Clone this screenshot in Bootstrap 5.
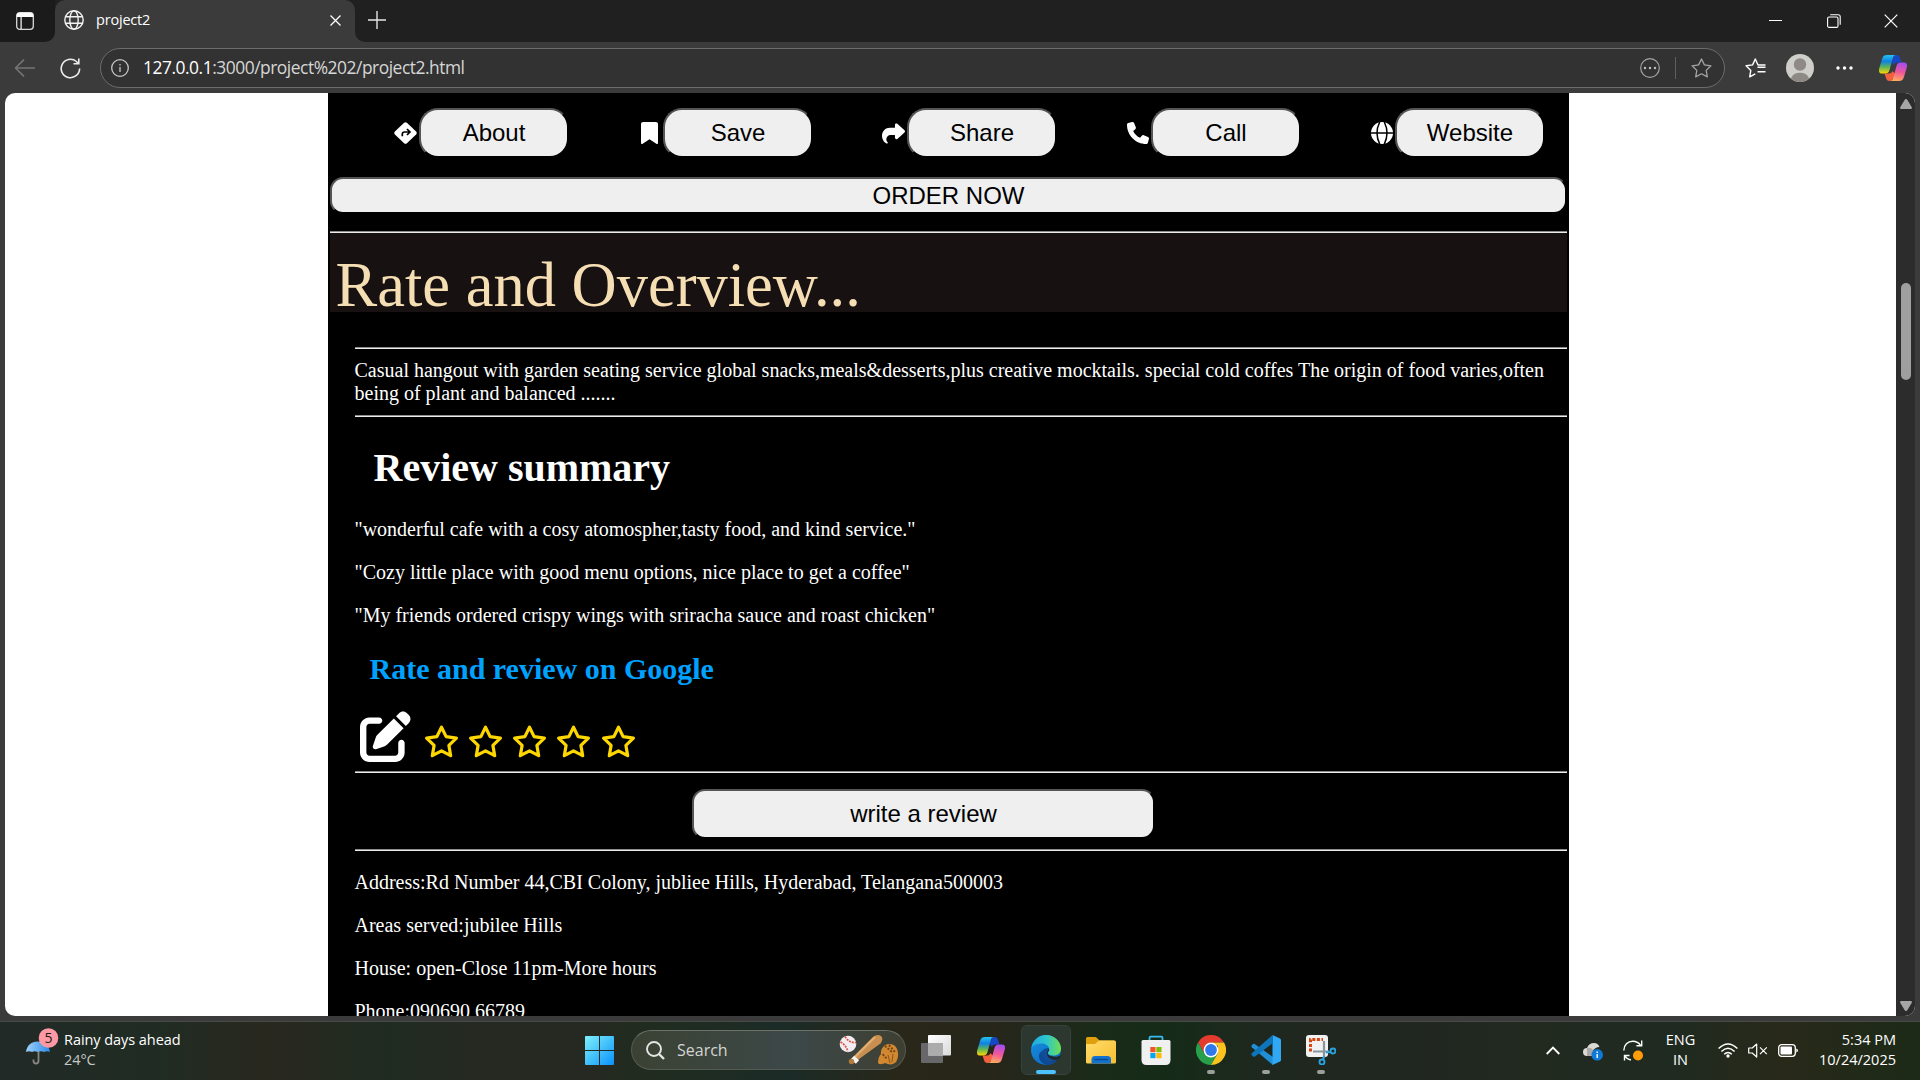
<!DOCTYPE html>
<html lang="en">
<head>
<meta charset="utf-8">
<title>project2</title>
<meta name="viewport" content="width=device-width, initial-scale=1">
<link href="https://cdn.jsdelivr.net/npm/bootstrap@5.3.0/dist/css/bootstrap.min.css" rel="stylesheet">
<style>
body{font-family:"Open Sans","Noto Sans",sans-serif;background:#3b3b3b;color:#fff}
svg{display:block;flex:none}
.tabstrip{height:42px;background:#202020}
.tabmenu{width:55px;background:#1b1b1b;border-bottom-right-radius:10px;padding-left:16px}
.tabmenu-wrap{background:#3b3b3b}
.tab-slot{background:#202020}
.tab-active{width:300px;background:#3b3b3b;border-radius:10px 10px 0 0;padding:0 14px 2px 9px;font-size:14.5px}
.tab-rest{background:#202020;border-bottom-left-radius:10px;padding-left:13px}
.tab-rest-wrap{background:#3b3b3b}
.tab-title{letter-spacing:-.2px;margin-left:12px}
.newtab{margin-bottom:3px}
.win-controls{padding-right:22px}
.toolbar{height:51px;padding:6px 13px 5px 14px}
.omnibox{height:40px;width:1625px;margin-left:20px;border:1px solid #6c6c6c;border-radius:20px;background:#323232;padding:0 12px 0 10px}
.url{font-size:17.4px;letter-spacing:-.47px;margin-left:14px;padding-bottom:1px;color:#d6d6d6;white-space:nowrap}
.url b{font-weight:400;color:#fff}
.vsep{width:1px;height:22px;background:#5e5e5e;margin:0 15px}
.surface{height:923px;width:1910px;margin-left:5px;border-radius:10px;background:#fff}
.scroller{width:19px;background:#2c2c2c;padding:6px 3px 5px}
.thumb{width:10px;height:97px;border-radius:5px;background:#9f9f9f;margin-top:174px}
.cafe{width:1241px;margin-left:323px;background:#000;font-family:"Liberation Serif",serif;font-size:20px;line-height:23px;padding:15px 2px 0}
.cafe p{margin:0 0 20px -.5px}
.cafe .blurb{margin:10px 0 10px -.5px}
.cafe button{font:24px/1 "Liberation Sans",sans-serif;background:#efefef;color:#000;border:2px solid;border-color:#555 #000 #000 #555;padding:0}
.actions{gap:69px;padding-right:22px}
.action-icon{width:23px;height:50px;margin-right:2px}
.actions button{width:150px;height:50px;border-radius:19px}
.cafe .order{height:37px;border-radius:13px;margin:19px 0 17px;width:100%}
.rule{height:2px;background:linear-gradient(#8c8c8c 50%,#ececec 50%)}
.overview{height:79px;background:#171211;color:#f5deb3;font-size:62.5px;line-height:104px;padding-left:5.5px;margin-bottom:35px;white-space:nowrap}
.details{padding-left:25px}
.cafe h1{font-size:40px;line-height:46px;font-weight:700;margin:28px 0 27px;padding-left:18.5px}
.cafe h3{font-size:30px;line-height:34px;font-weight:700;margin:25px 0;padding-left:14.5px;color:#00a2ff}
.rating{height:50px;padding-left:5px;margin-bottom:10px}
.cafe .write{width:463px;height:50px;border-radius:13px;margin:16px 0 10px 337px}
.taskbar{height:59px;margin-top:5px;padding-bottom:2px;border-top:1px solid #484a48;background:linear-gradient(90deg,#222a27 0,#202c23 8%,#29281f 14%,#1f2b21 20%,#262922 25%,#252921 31%,#202c1f 34%,#1b2b27 41%,#292719 47%,#26261b 52%,#182b19 58%,#152b18 61%,#1f281f 66%,#202620 73%,#222a20 80%,#1f2a20 87%,#282919 93%,#1c2a17 100%)}
.weather{width:585px;padding:0 0 1px 24px;font-size:14.5px;line-height:20px;letter-spacing:-.06px}
.weather-pic{width:40px;height:38px;margin-top:-7px}
.search{width:275px;height:40px;margin-left:17px;border-radius:20px;border:1px solid #545a50;border-top-color:#6c7267;background:linear-gradient(90deg,#3b4234,#3c4641 40%,#3c4849 60%,#3e3f31);padding:0 6px 0 14px;font-size:16px;color:#d3d5d2}
.apps{margin-left:2.5px}
.slot{width:55px;height:50px;padding-top:10px}
.slot i{display:block;height:4px;width:8px;border-radius:2px;background:#9a9f99;margin-top:5px}
.slot .tile{width:50px;height:50px;border-radius:6px;background:#2b372f;border:1px solid #37423a;margin-top:-10px;padding-top:9px}
.slot .tile i{width:20px;background:#4cc2ff}
.tray{padding-right:24px;font-size:14.5px;line-height:20px}
</style>
<script src="https://cdn.jsdelivr.net/npm/bootstrap@5.3.0/dist/js/bootstrap.bundle.min.js"></script>
</head>
<body class="vh-100 overflow-hidden">
<svg width="0" height="0" class="position-absolute">
<defs>
<linearGradient id="cpA" x1="0" y1="0" x2="0" y2="1"><stop offset="0" stop-color="#22c3f3"/><stop offset=".35" stop-color="#1181e0"/><stop offset=".65" stop-color="#5ab55a"/><stop offset="1" stop-color="#ffd600"/></linearGradient>
<linearGradient id="cpB" x1=".6" y1="0" x2=".4" y2="1"><stop offset="0" stop-color="#a34df0"/><stop offset=".5" stop-color="#f0569a"/><stop offset="1" stop-color="#ffac5e"/></linearGradient>
<symbol id="copilot" viewBox="0 0 28 26">
<path d="M16 0h1.500c2 0 3 1 3.600 3l1.400 4.500h-4c-2 0-3 1-3.500 2.500L12 6z" fill="#1747c4"/>
<path d="M12 26h-1.500c-2 0-3-1-3.500-3l-1.500-4.500h4.500c2 0 3-1 3.500-2.500L17 20z" fill="#f2603e"/>
<path d="M8 0h9c-2 0-2.700 1.500-3.300 3.500L10.500 15c-.8 2.600-2 3.500-4.500 3.500H3c-2.600 0-3.600-2-2.800-5L3.200 3.500C4 1 5.500 0 8 0z" fill="url(#cpA)"/>
<path d="M20 26h-9c2 0 2.700-1.500 3.300-3.500L17.500 11c.8-2.600 2-3.500 4.500-3.500h3c2.600 0 3.600 2 2.800 5l-3 10c-.8 2.500-2.300 3.500-4.800 3.500z" fill="url(#cpB)"/>
</symbol>
<symbol id="star" viewBox="0 0 35 33"><path d="M17.500 2.200l4.600 9.400 10.300 1.500-7.500 7.300 1.800 10.300-9.200-4.900-9.200 4.900 1.800-10.300-7.500-7.300 10.300-1.500z" fill="none" stroke="#ffd700" stroke-width="3.200" stroke-linejoin="round"/></symbol>
</defs>
</svg>

<!-- Tab strip -->
<div class="tabstrip d-flex">
  <div class="tabmenu-wrap"><div class="tabmenu h-100 d-flex align-items-center"><svg width="18" height="18" viewBox="0 0 18 18"><rect x=".7" y=".7" width="16.600" height="16.600" rx="3" fill="none" stroke="#d8d8d8" stroke-width="1.300"/><path d="M.7 5V3.500Q.7.700 3.500.700h11q2.800 0 2.800 2.800V5zM4.500 5h1.200v12H4.500z" fill="#fff"/></svg></div></div>
  <div class="tab-rest-wrap d-flex flex-grow-1">
    <div class="tab-slot"><div class="tab-active h-100 d-flex align-items-center">
      <svg width="20" height="20" viewBox="0 0 20 20" fill="none" stroke="#f2f2f2" stroke-width="1.400"><circle cx="10" cy="10" r="9.200"/><ellipse cx="10" cy="10" rx="4.200" ry="9.200"/><path d="M1.600 6.800h16.800M1.600 13.200h16.800"/></svg>
      <span class="tab-title">project2</span>
      <svg class="ms-auto" width="11" height="11" viewBox="0 0 11 11" stroke="#fff" stroke-width="1.300"><path d="M.5.500l10 10M10.500.500l-10 10"/></svg>
    </div></div>
    <div class="tab-rest flex-grow-1 d-flex align-items-center">
      <svg class="newtab" width="18" height="18" viewBox="0 0 18 18" stroke="#e6e6e6" stroke-width="1.400"><path d="M9 0v18M0 9h18"/></svg>
      <div class="win-controls ms-auto d-flex align-items-center">
        <svg width="13" height="13" stroke="#fff"><path d="M0 5.500h13"/></svg>
        <svg class="mx-0" width="102" height="14" viewBox="-45 0 102 14" fill="none" stroke="#fff" stroke-width="1.100"><rect x=".6" y="3" width="10.400" height="10.400" rx="1.500"/><path d="M3.200.7h8q2 0 2 2v8"/></svg>
        <svg width="14" height="14" viewBox="0 0 14 14" stroke="#fff" stroke-width="1.200"><path d="M.7.700l12.600 12.600M13.300.700L.7 13.300"/></svg>
      </div>
    </div>
  </div>
</div>

<!-- Toolbar -->
<div class="toolbar d-flex align-items-center">
  <svg width="21" height="18" viewBox="0 0 21 18" fill="none" stroke="#767676" stroke-width="1.500"><path d="M21 9H1.500M10 .6L1.500 9l8.500 8.400"/></svg>
  <svg width="21" height="21" viewBox="0 0 21 21" fill="none" stroke="#ededed" stroke-width="1.600" style="margin-left:25px;margin-right:-1px"><path d="M19.600 10.500a9.200 9.200 0 1 1-3.200-7l2.200 2.200M18.800.500v5.300h-5.300"/></svg>
  <div class="omnibox d-flex align-items-center">
    <svg width="18" height="18" viewBox="0 0 18 18" fill="none" stroke="#c8c8c8" stroke-width="1.300"><circle cx="9" cy="9" r="8.300"/><path d="M9 8v5M9 5v1.500"/></svg>
    <span class="url"><b>127.0.0.1</b>:3000/project%202/project2.html</span>
    <svg class="ms-auto" width="20" height="20" viewBox="0 0 20 20"><circle cx="10" cy="10" r="9.300" fill="none" stroke="#a4a4a4" stroke-width="1.200"/><g fill="#c0c0c0"><circle cx="5" cy="10" r="1.200"/><circle cx="10" cy="10" r="1.200"/><circle cx="15" cy="10" r="1.200"/></g></svg>
    <div class="vsep"></div>
    <svg width="21" height="20" viewBox="0 0 21 20" fill="none" stroke="#a4a4a4" stroke-width="1.300" stroke-linejoin="round"><path d="M10.500 1l2.900 5.900 6.500.9-4.700 4.600 1.100 6.500-5.800-3.100-5.800 3.100 1.100-6.500L1.100 7.800l6.500-.9z"/></svg>
  </div>
  <svg width="21" height="20" viewBox="0 0 21 20" fill="none" stroke="#fff" stroke-width="1.400" stroke-linejoin="round" style="margin-left:20px"><path d="M20.500 9.300h-8M20.500 13.800h-8M20.500 7H13L10.300 1 7.600 6.900l-6.500.9 4.700 4.600-1.100 6.500 5.600-3"/></svg>
  <svg width="28" height="28" viewBox="0 0 28 28" style="margin-left:20px"><circle cx="14" cy="14" r="14" fill="#d0cecb"/><circle cx="14" cy="10.500" r="6.200" fill="#8e8985"/><path d="M5 24.700c1-4 4.500-6 9-6s8 2 9 6a14 14 0 0 1-18 0z" fill="#8e8985"/></svg>
  <svg width="17" height="4" viewBox="0 0 17 4" fill="#fff" style="margin-left:22px"><circle cx="2" cy="2" r="1.700"/><circle cx="8.500" cy="2" r="1.700"/><circle cx="15" cy="2" r="1.700"/></svg>
  <svg class="ms-auto" width="28" height="26"><use href="#copilot"/></svg>
</div>

<!-- Page -->
<div class="surface d-flex overflow-hidden">
  <main class="cafe flex-shrink-0">
    <div class="actions d-flex justify-content-end">
      <div class="d-flex"><span class="action-icon d-flex align-items-center justify-content-center"><svg width="23" height="22" viewBox="0 0 23 22"><path d="M10.100.800q1.400-1.300 2.800 0l9.200 8.800q1.300 1.400 0 2.800l-9.200 8.800q-1.400 1.300-2.800 0L.9 12.400q-1.300-1.400 0-2.800z" fill="#fff"/><path d="M8.300 14.300v-2q0-2.300 2.300-2.300h4.600M13 7l3 3-3 3" fill="none" stroke="#000" stroke-width="1.700"/></svg></span><button>About</button></div>
      <div class="d-flex"><span class="action-icon d-flex align-items-center justify-content-center"><svg width="17" height="22" viewBox="0 0 384 512" preserveAspectRatio="none" fill="#fff"><path d="M0 48V488C0 501 11 512 24 512c5 0 10-1.500 14-4.400L192 400l154 107.600c4 2.900 9 4.400 14 4.400 13 0 24-11 24-24V48c0-26-22-48-48-48H48C22 0 0 22 0 48z"/></svg></span><button>Save</button></div>
      <div class="d-flex"><span class="action-icon d-flex align-items-center justify-content-center"><svg width="23" height="23" viewBox="0 0 512 512" fill="#fff"><path d="M307 34.800c-11.500 5.100-19 16.600-19 29.200v64H176C78.800 128 0 206.800 0 304c0 113.300 81.500 163.900 100.200 174.100 2.500 1.400 5.300 1.900 8.100 1.900 10.900 0 19.700-8.900 19.700-19.700 0-7.500-4.300-14.400-9.800-19.500C108.800 431.900 96 414.400 96 384c0-53 43-96 96-96h96v64c0 12.600 7.400 24.100 19 29.200s25 3 34.400-5.400l160-144c6.700-6.100 10.600-14.700 10.600-23.800s-3.800-17.700-10.600-23.800l-160-144c-9.400-8.500-22.900-10.600-34.400-5.400z"/></svg></span><button>Share</button></div>
      <div class="d-flex"><span class="action-icon d-flex align-items-center justify-content-center"><svg width="22" height="22" viewBox="0 0 512 512" fill="#fff"><path d="M164.900 24.600c-7.700-18.600-28-28.500-47.400-23.200l-88 24C12.100 30.200 0 46 0 64c0 247.400 200.600 448 448 448 18 0 33.800-12.100 38.600-29.500l24-88c5.300-19.400-4.600-39.700-23.200-47.400l-96-40c-16.300-6.800-35.200-2.100-46.300 11.600L304.700 368C234.300 334.700 177.300 277.700 144 207.300L193.300 167c13.700-11.200 18.400-30 11.600-46.300l-40-96z"/></svg></span><button>Call</button></div>
      <div class="d-flex"><span class="action-icon d-flex align-items-center justify-content-center"><svg width="22" height="22" viewBox="0 0 22 22"><circle cx="11" cy="11" r="11" fill="#fff"/><path d="M0 11h22M8.700 0q-5.400 11 0 22M13.300 0q5.400 11 0 22" fill="none" stroke="#000" stroke-width="1.500"/></svg></span><button>Website</button></div>
    </div>
    <button class="order d-block">ORDER NOW</button>
    <div class="rule"></div>
    <div class="overview">Rate and Overview...</div>
    <div class="details">
      <div class="rule"></div>
      <p class="blurb">Casual hangout with garden seating service global snacks,meals&amp;desserts,plus creative mocktails. special cold coffes The origin of food varies,often being of plant and balanced .......</p>
      <div class="rule"></div>
      <h1>Review summary</h1>
      <p>"wonderful cafe with a cosy atomospher,tasty food, and kind service."</p>
      <p>"Cozy little place with good menu options, nice place to get a coffee"</p>
      <p>"My friends ordered crispy wings with sriracha sauce and roast chicken"</p>
      <h3>Rate and review on Google</h3>
      <div class="rating d-flex align-items-end">
        <svg width="51" height="51" viewBox="0 0 512 512" fill="#fff" style="margin-right:13px;margin-bottom:-1px"><path d="M471.600 21.700c-21.900-21.900-57.300-21.900-79.200 0L362.300 51.700l97.900 97.900 30.100-30.100c21.900-21.900 21.900-57.300 0-79.200L471.600 21.700zm-299.200 220c-6.100 6.100-10.800 13.600-13.500 21.900l-29.600 88.800c-2.900 8.600-.6 18.100 5.800 24.600s15.900 8.700 24.600 5.800l88.800-29.600c8.200-2.700 15.700-7.400 21.900-13.500L437.700 172.300 339.700 74.300 172.400 241.700zM96 64C43 64 0 107 0 160v256c0 53 43 96 96 96h256c53 0 96-43 96-96v-96c0-17.700-14.300-32-32-32s-32 14.300-32 32v96c0 17.700-14.300 32-32 32H96c-17.700 0-32-14.300-32-32V160c0-17.700 14.300-32 32-32h96c17.700 0 32-14.300 32-32s-14.300-32-32-32H96z"/></svg>
        <div class="d-flex" style="gap:9.150px;padding-bottom:3px">
          <svg width="35" height="33"><use href="#star"/></svg><svg width="35" height="33"><use href="#star"/></svg><svg width="35" height="33"><use href="#star"/></svg><svg width="35" height="33"><use href="#star"/></svg><svg width="35" height="33"><use href="#star"/></svg>
        </div>
      </div>
      <div class="rule"></div>
      <button class="write d-block">write a review</button>
      <div class="rule" style="margin-bottom:20px"></div>
      <p>Address:Rd Number 44,CBI Colony, jubliee Hills, Hyderabad, Telangana500003</p>
      <p>Areas served:jubilee Hills</p>
      <p>House: open-Close 11pm-More hours</p>
      <p>Phone:090690 66789</p>
    </div>
  </main>
  <div class="scroller ms-auto d-flex flex-column align-items-center">
    <svg width="12" height="10" fill="#a6a6a6"><path d="M6 0q.8 0 1.300.8l4.500 7.400q.5 1.800-1 1.800H1.200Q-.3 10 .2 8.200L4.700.800Q5.200 0 6 0z"/></svg>
    <div class="thumb"></div>
    <svg class="mt-auto" width="12" height="10" fill="#a6a6a6"><path d="M6 10q.8 0 1.300-.8l4.500-7.400Q12.300 0 10.800 0H1.200Q-.3 0 .2 1.800l4.500 7.400Q5.200 10 6 10z"/></svg>
  </div>
</div>

<!-- Taskbar -->
<div class="taskbar d-flex align-items-center">
  <div class="weather d-flex align-items-center">
    <svg class="weather-pic" viewBox="0 0 40 38"><defs><linearGradient id="um"><stop offset="0" stop-color="#9fd2fb"/><stop offset="1" stop-color="#2a8be8"/></linearGradient></defs><path d="M14.500 23v11a2.500 2.500 0 0 1-5 0v-1.500" fill="none" stroke="#8b8583" stroke-width="1.800"/><path d="M2 25C3 18 7.500 14.500 13.500 14.500S25 18 26 25q-3-1.500-6 0-3-1.500-6.500 0-3-1.500-5.500 0-3-1.500-6 0z" fill="url(#um)"/><circle cx="24.500" cy="11" r="9.800" fill="#fe99a4"/><text x="24.500" y="16" text-anchor="middle" font-size="14" fill="#1a1a1a">5</text></svg>
    <div><div>Rainy days ahead</div><div style="color:#c6c9c6">24°C</div></div>
  </div>
  <svg width="29" height="29" viewBox="0 0 29 29"><defs><linearGradient id="wn" x1="0" y1="0" x2="1" y2="1"><stop offset="0" stop-color="#7ef0fc"/><stop offset="1" stop-color="#0a92fa"/></linearGradient></defs><path d="M1 0h13v14H0V1q0-1 1-1zM15 0h13q1 0 1 1v13H15zM0 15h14v14H1q-1 0-1-1zM15 15h14v13q0 1-1 1H15z" fill="url(#wn)"/></svg>
  <div class="search d-flex align-items-center">
    <svg width="19" height="19" viewBox="0 0 19 19" fill="none" stroke="#e4e6e4" stroke-width="1.900"><circle cx="8" cy="8" r="7"/><path d="M13 13l5 5" stroke-width="2.400"/></svg>
    <span style="margin-left:12px">Search</span>
    <svg class="ms-auto" width="60" height="32" viewBox="0 0 60 32"><circle cx="9" cy="10" r="8.300" fill="#f1edf2"/><path d="M1.500 8Q7 11 9 17.500M6 2.500q4 6.500 11 6" fill="none" stroke="#e0503f" stroke-width="1.700" stroke-dasharray="2 1"/><path d="M11 26L34 3q4-3.500 8-1 3 3-.5 7.500L14.500 29z" fill="#c98f50"/><path d="M14 25L36 3" stroke="#e3b073" stroke-width="2"/><path d="M13.500 23.500l5 4.500" stroke="#f4f2ef" stroke-width="5"/><circle cx="12.500" cy="27.500" r="2.700" fill="#b27a3c"/><path d="M39 29c0-4 1-7 3-9-1-4 3-10 8-10q6 0 8 5c2 5 1 10-1 13-3 3-7 3-11 1-2 1-5 2-7 0z" fill="#d18830"/><path d="M44 20c1 3 3 4 5 4M46 12l8 7M50 11l6 7" stroke="#754516" stroke-width="2" stroke-dasharray="2 1.500" fill="none"/><path d="M49 21l2 8M54 20l-1 8" stroke="#8c5518" fill="none"/></svg>
  </div>
  <div class="apps d-flex">
    <div class="slot d-flex flex-column align-items-center"><svg width="30" height="28" viewBox="0 0 30 28"><defs><linearGradient id="tv" x1="0" x2="1" y1="0" y2="1"><stop offset="0" stop-color="#fff"/><stop offset="1" stop-color="#d9d9d9"/></linearGradient></defs><rect y="8" width="22" height="20" rx="1" fill="#68686a"/><rect x="7" y="0" width="23" height="20.500" rx="1" fill="url(#tv)"/><path d="M7 8h15v12.500H7z" fill="#acacad"/></svg></div>
    <div class="slot d-flex flex-column align-items-center"><svg width="28" height="26" style="margin-top:2px"><use href="#copilot"/></svg></div>
    <div class="slot d-flex flex-column align-items-center"><div class="tile d-flex flex-column align-items-center">
      <svg width="30" height="30" viewBox="0 0 30 30"><defs><linearGradient id="ea" x1="0" x2="1"><stop offset="0" stop-color="#1fa9dd"/><stop offset=".5" stop-color="#2cc5cf"/><stop offset="1" stop-color="#6fe04e"/></linearGradient><linearGradient id="eb" x1="0" x2=".7" y2="1"><stop offset="0" stop-color="#1794df"/><stop offset="1" stop-color="#0d69c4"/></linearGradient></defs><circle cx="15" cy="15" r="15" fill="url(#eb)"/><path d="M.5 12.500C2 5 7.800 0 15 0c8.500 0 15 6.500 15 13.500 0 4.500-3.300 7-7.500 7-3.600 0-5.700-1.200-5.700-2.500 0-1 1.400-1.500 1.400-3.800 0-3.200-3.200-5.700-7.400-5.700C6.500 8.500 2.500 10 .5 12.500z" fill="url(#ea)"/><path d="M10.700 16.500c-.7 6.500 4 10.300 9 10.300 3.200 0 5.800-1.300 7.500-2.800C24.500 28 20 30 15.500 30c-4-1-8-5-7.500-9.500.2-2 1.200-3.500 2.700-4z" fill="#0c4a97"/><path d="M30 20.700q-.2-1-1-.3c-1.500 1-4 1.500-6.500 1.200-3.700-.3-6.200-2-5.700-4 .3-1.200 1.500-1.600 1.400-3.600-3.500-1-7 1-7.500 4-.6 4.600 3.500 8.800 9 8.800 5 0 9-2.500 10.300-6.100z" fill="#20272a"/><path d="M18 13.500c-3.800-.7-7.300 1.600-7.500 5-.1 4.500 4 8.500 9.500 8.300 3 0 5.500-1.200 7-2.300-5 1.500-11-1.500-11-6 0-2 1-4 2-5z" fill="#114d9b"/></svg>
      <i></i></div></div>
    <div class="slot d-flex flex-column align-items-center"><svg width="30" height="28" viewBox="0 0 30 28" style="margin-top:1px"><defs><linearGradient id="fo" x1="0" x2="1" y1="0" y2="1"><stop offset="0" stop-color="#ffdc6b"/><stop offset="1" stop-color="#f8bf30"/></linearGradient></defs><path d="M0 2.500Q0 1 1.500 1H9q1 0 2 1l2.500 2.500H28V12H0z" fill="#e0a00e"/><path d="M0 8h9l4-3.500h15.500Q30 4.500 30 6v20q0 1.500-1.500 1.500h-27Q0 27.500 0 26z" fill="url(#fo)"/><path d="M5.500 27.500v-4q0-3.500 3.500-3.500h12.500q3.500 0 3.500 3.500v4z" fill="#1372cb"/><path d="M9 23.500h12.500" stroke="#084b90" stroke-width="1.400" stroke-linecap="round"/></svg></div>
    <div class="slot d-flex flex-column align-items-center"><svg width="30" height="30" viewBox="0 0 30 30"><path d="M8.500 6V3q0-1.300 1.300-1.300h10.400q1.300 0 1.300 1.300v3" fill="none" stroke="#35bdf2" stroke-width="1.800"/><path d="M.5 6.500Q.5 5 2 5h26q1.500 0 1.500 1.500V25q0 5-5 5h-19q-5 0-5-5z" fill="#f0f0f0"/><path d="M9.300 12h5.200v5.200H9.300z" fill="#f35325"/><path d="M15.300 12h5.200v5.200h-5.200z" fill="#81bc06"/><path d="M9.300 18h5.200v5.200H9.300z" fill="#05a6f0"/><path d="M15.300 18h5.200v5.200h-5.200z" fill="#ffba08"/></svg></div>
    <div class="slot d-flex flex-column align-items-center"><svg width="30" height="30" viewBox="0 0 30 30"><path d="M2 7.500A15 15 0 0 1 28 7.500H15L8.500 18.700z" fill="#e33b2e"/><path d="M2 7.500A15 15 0 0 0 15 30l6.500-11.200h-13z" fill="#279f4b"/><path d="M28 7.500A15 15 0 0 1 15 30l6.500-11.200L22 11 15 7.500z" fill="#fcc31e"/><circle cx="15" cy="15" r="7.400" fill="#fff"/><circle cx="15" cy="15" r="5.900" fill="#2f79ea"/></svg><i></i></div>
    <div class="slot d-flex flex-column align-items-center"><svg width="30" height="30" viewBox="0 0 30 30"><path d="M22 30L.8 12.300q-.8-1 0-2l1.200-1.200q.8-.6 1.700 0L22 22z" fill="#1f8fd8"/><path d="M21.500 0L29 3.500q1 .5 1 1.500v20q0 1-1 1.500L21.500 30z" fill="#31a8f3"/><path d="M.8 18.300L21.500 0l.5 8L4 21.500q-1 .6-1.800-.1L.8 20.200q-.8-1 0-1.900z" fill="#0f75bb"/></svg><i></i></div>
    <div class="slot d-flex flex-column align-items-center"><svg width="30" height="30" viewBox="0 0 30 30"><rect width="22" height="22" rx="3" fill="#f2f2f2"/><path d="M4.500 16.500v-12H17" fill="none" stroke="#d6450f" stroke-width="3" stroke-dasharray="3 1.600"/><path d="M7 16.500h16M18 6v17" stroke="#8a969d" stroke-width="2.200"/><g fill="none" stroke="#28a3df" stroke-width="1.900"><circle cx="27" cy="16" r="2.500"/><circle cx="16" cy="27" r="2.500"/><path d="M20 17.500l5-.5M18 21l-1 4"/></g></svg><i></i></div>
  </div>
  <div class="tray ms-auto d-flex align-items-center">
    <svg width="14" height="9" viewBox="0 0 14 9" fill="none" stroke="#fff" stroke-width="1.800"><path d="M.7 8L7 1.500 13.300 8"/></svg>
    <svg width="20" height="18" viewBox="0 0 20 18" style="margin-left:23px;margin-top:3px"><path d="M4 13Q0 13 0 9t4-4q2-5 7-5 4 0 5.500 4Q12 4 9 9v4z" fill="#d9d9d6"/><path d="M4 5q5-1 7 4l-3 4H4z" fill="#aaa9a6"/><circle cx="14.200" cy="11.800" r="5.800" fill="#0e79d8"/><path d="M14.200 11v4M14.200 8.400v1.500" stroke="#fff" stroke-width="1.400"/></svg>
    <svg width="20" height="21" viewBox="0 0 20 21" fill="none" stroke="#fff" stroke-width="1.400" style="margin-left:20px"><path d="M.8 10.500C.8 5 4.800 1.200 9.700 1.200c3.300 0 6.300 1.600 8 4.300M18.700.500v5.300h-5.300M1.500 20.500v-5h5M2 16q2 3.500 6 4"/><circle cx="15" cy="15.500" r="5" fill="#ff9c09" stroke="none"/></svg>
    <div class="text-center" style="margin-left:22px;width:31px">ENG<br>IN</div>
    <svg width="20" height="15" viewBox="0 0 20 15" fill="none" stroke="#fff" stroke-width="1.500" style="margin-left:22px"><path d="M.6 5.500q9.400-9 18.800 0M3.400 8.500q6.600-6.500 13.200 0M6.200 11.300q3.800-3.800 7.600 0"/><circle cx="10" cy="13" r="1.700" fill="#fff" stroke="none"/></svg>
    <svg width="20" height="15" viewBox="0 0 20 15" fill="none" stroke="#fff" stroke-width="1.200" stroke-linejoin="round" style="margin-left:10px"><path d="M.7 5v5h3.500l4.500 4V1L4.200 5zM12 4.300l6.800 6.800M18.800 4.300L12 11.100"/></svg>
    <svg width="20" height="13" viewBox="0 0 20 13" style="margin-left:10px"><rect x=".7" y=".7" width="16.600" height="11.600" rx="3" fill="none" stroke="#fff" stroke-width="1.300"/><rect x="2.500" y="2.500" width="11.500" height="8" rx="1" fill="#fff"/><path d="M18.300 4.500q1.700.500 1.700 2t-1.700 2z" fill="#fff"/></svg>
    <div class="text-end" style="width:98px">5:34 PM<br>10/24/2025</div>
  </div>
</div>
</body>
</html>
